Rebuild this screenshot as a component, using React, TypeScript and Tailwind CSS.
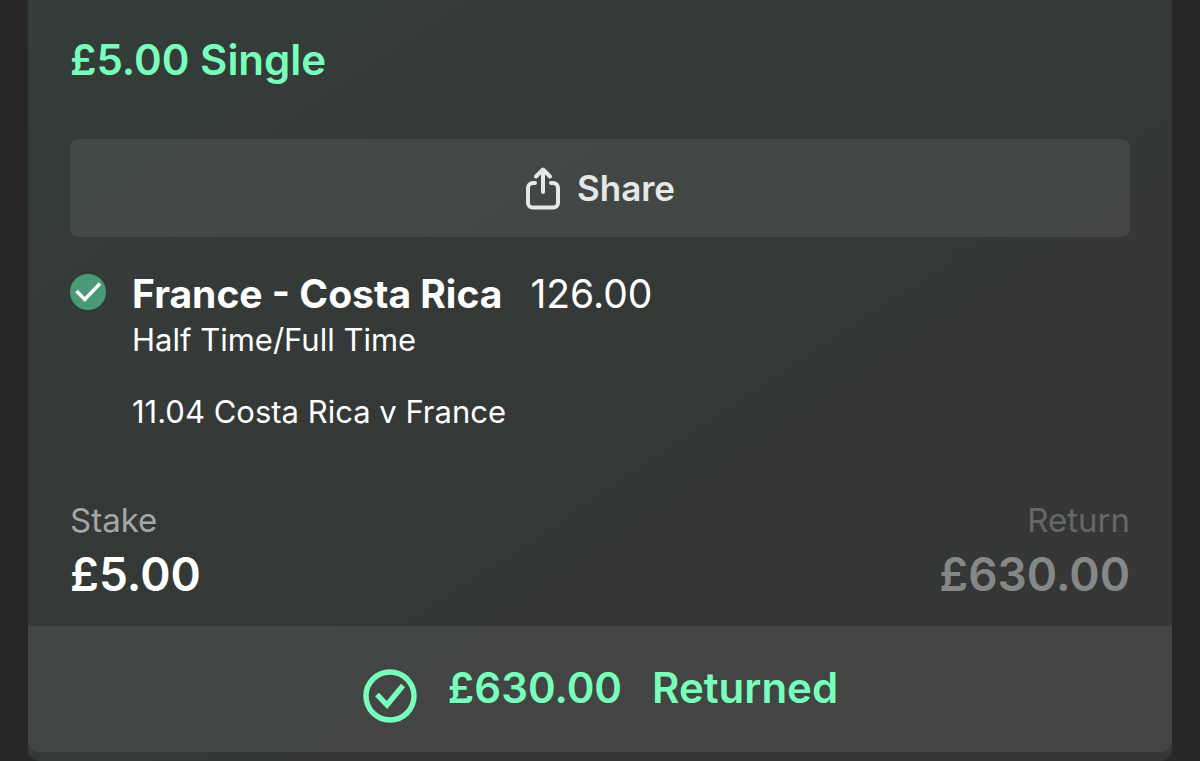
interface BetSlipProps {
  stake: string
  betType: string
  selection: string
  odds: string
  market: string
  fixture: string
  returns: string
}

const ShareIcon = () => (
  <svg
    className="h-11 w-9"
    viewBox="0 0 36 44"
    fill="none"
    stroke="currentColor"
    strokeWidth="4"
    strokeLinecap="round"
    strokeLinejoin="round"
    aria-hidden="true"
  >
    <path d="M10 17H8a5 5 0 0 0-5 5v15a4.500 4.500 0 0 0 4.500 4.500h21A4.500 4.500 0 0 0 33 37V22a5 5 0 0 0-5-5h-2" />
    <path d="M18 26V4M11 10.500L18 3.500l7 7" />
  </svg>
)

const WonIcon = () => (
  <svg className="size-9 shrink-0" viewBox="0 0 36 36" fill="none" aria-hidden="true">
    <circle cx="18" cy="18" r="18" fill="#4a9a75" />
    <path d="M6.500 17l8.300 8.500L30 9.500" stroke="#fff" strokeWidth="3.400" />
  </svg>
)

const ReturnedIcon = () => (
  <svg
    className="size-14 shrink-0"
    viewBox="0 0 56 56"
    fill="none"
    stroke="currentColor"
    strokeWidth="5.400"
    aria-hidden="true"
  >
    <circle cx="28" cy="28" r="24" />
    <path d="M15 26.500l10 10.500L41 17.500" />
  </svg>
)

function BetSlip({ stake, betType, selection, odds, market, fixture, returns }: BetSlipProps) {
  return (
    <article className="mx-7 rounded-b-xl bg-linear-to-br from-[#343d39] via-[#343836] to-[#363636] pb-[9px]">
      <div className="px-[42px] pt-8 pb-[22px]">
        <h1 className="text-[42px] leading-14 font-semibold text-[#77ffbb]">
          {stake} {betType}
        </h1>

        <button
          type="button"
          className="mt-[51px] flex h-[98px] w-full items-center justify-center gap-4 rounded-lg bg-white/7 text-[35px] font-semibold text-[#e6e8e7]"
        >
          <ShareIcon />
          Share
        </button>

        {/* Selection */}
        <section className="mt-[33px] flex gap-[26px] text-white">
          <div className="pt-1">
            <WonIcon />
          </div>
          <div>
            <div className="flex items-center gap-7 text-[39px] leading-12">
              <h2 className="font-bold">{selection}</h2>
              <span>{odds}</span>
            </div>
            <p className="text-[31px] leading-11">{market}</p>
            <p className="mt-7 text-[31px] leading-11">{fixture}</p>
          </div>
        </section>

        {/* Stake and return */}
        <dl className="mt-[62px] flex justify-between">
          <div>
            <dt className="text-[33px] leading-12 text-[#a5a7a6]">Stake</dt>
            <dd className="text-[46px] leading-15 font-semibold text-white">{stake}</dd>
          </div>
          <div className="text-right">
            <dt className="text-[33px] leading-12 text-[#666867]">Return</dt>
            <dd className="text-[46px] leading-15 font-semibold text-[#868887]">{returns}</dd>
          </div>
        </dl>
      </div>

      <footer className="flex h-[126px] items-center justify-center gap-[30px] rounded-b-xl bg-white/7 pb-1 text-[42px] font-semibold text-[#77ffbb]">
        <div className="pt-[18px]">
          <ReturnedIcon />
        </div>
        <span>{returns}</span>
        <span>Returned</span>
      </footer>
    </article>
  )
}

export default function App() {
  return (
    <main className="min-h-screen bg-[#272727] font-['Inter',sans-serif]">
      <BetSlip
        stake="£5.00"
        betType="Single"
        selection="France - Costa Rica"
        odds="126.00"
        market="Half Time/Full Time"
        fixture="11.04 Costa Rica v France"
        returns="£630.00"
      />
    </main>
  )
}
